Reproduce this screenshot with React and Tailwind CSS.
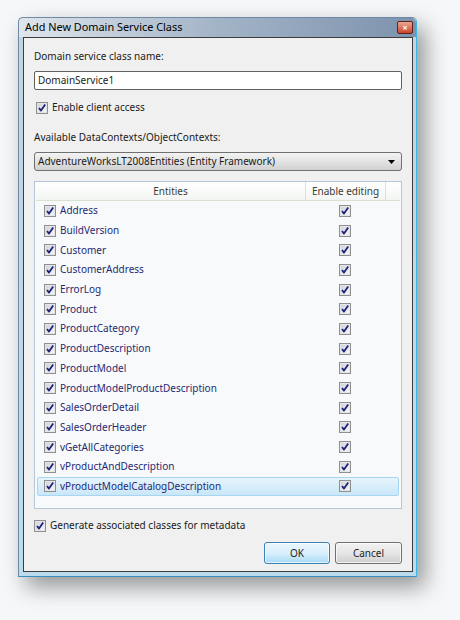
import React from 'react';

const entities = [
  'Address',
  'BuildVersion',
  'Customer',
  'CustomerAddress',
  'ErrorLog',
  'Product',
  'ProductCategory',
  'ProductDescription',
  'ProductModel',
  'ProductModelProductDescription',
  'SalesOrderDetail',
  'SalesOrderHeader',
  'vGetAllCategories',
  'vProductAndDescription',
  'vProductModelCatalogDescription',
];

// vista style checked box
const Check = () => (
  <svg width="12" height="12" viewBox="0 0 12 12" className="shrink-0">
    <defs>
      <linearGradient id="cbg" x1="0" y1="0" x2="1" y2="1">
        <stop offset="0" stopColor="#cfd2d7" />
        <stop offset="1" stopColor="#f7f7f7" />
      </linearGradient>
    </defs>
    <rect x="0.5" y="0.5" width="11" height="11" fill="#f4f4f4" stroke="#8f8f8f" />
    <rect x="1.5" y="1.5" width="9" height="9" fill="url(#cbg)" stroke="#e4e6ea" />
    <path d="M3 6 L5 8.6 L9.2 2.6" fill="none" stroke="#1f2379" strokeWidth="1.8" strokeLinejoin="round" />
  </svg>
);

export default function App() {
  return (
    <div className="min-h-screen bg-[#f6f7f9] pt-[17px] pl-[18px] font-['Noto_Sans',sans-serif] text-[10px] text-[#1a1a1a]">
      <div className="w-[399px] h-[560px] flex flex-col bg-gradient-to-b from-[#c4d3e0] to-[#bcdcee] border border-[#6f8aa6] border-r-[#3fb6e2] border-b-[#3a8fc0] rounded-t-[5px] shadow-[8px_10px_22px_rgba(0,0,0,0.4)]">
        {/* title bar */}
        <div className="h-[19px] flex items-center justify-between pl-[6px] pr-[3px] rounded-t-[5px] bg-gradient-to-r from-[#dfe5ec] via-[#a3b4c7] to-[#7d92ad]">
          <span className="text-[10.9px] text-black leading-none">Add New Domain Service Class</span>
          <div className="w-[16px] h-[13px] rounded-[2px] border border-[#5a2418] bg-gradient-to-b from-[#e9a894] to-[#c8432a] flex items-center justify-center text-white text-[9px] font-bold leading-none">
            ×
          </div>
        </div>

        {/* client area */}
        <div className="flex-1 ml-[4px] mr-[3px] mb-[4px] border border-[#3c3c3c] bg-[#f0f0f0] px-[10px] pt-[10px] flex flex-col">
          <div className="h-[16px] leading-[16px]">Domain service class name:</div>
          <div className="mt-[7px] h-[19px] border border-[#606060] rounded-[2px] bg-white flex items-center px-[3px]">
            DomainService1
          </div>
          <div className="mt-[11px] h-[13px] flex items-center gap-[4px] pl-[2px]">
            <Check />
            <span>Enable client access</span>
          </div>

          <div className="mt-[15px] h-[16px] leading-[16px]">Available DataContexts/ObjectContexts:</div>
          <div className="mt-[7px] h-[19px] border border-[#707070] rounded-[3px] bg-gradient-to-b from-[#f3f3f3] via-[#e3e3e3] to-[#d0d0d0] flex items-center justify-between pl-[3px] pr-[6px]">
            <span>AdventureWorksLT2008Entities (Entity Framework)</span>
            <svg width="7" height="4" viewBox="0 0 7 4">
              <path d="M0 0 H7 L3.5 4 Z" fill="#000" />
            </svg>
          </div>

          {/* entities grid */}
          <div className="mt-[10px] h-[328px] border border-[#b4c8da] bg-[#f8f9fa] flex flex-col px-[1px]">
            <div className="h-[19px] flex border-b border-[#d8e2d0] bg-gradient-to-b from-[#ffffff] to-[#f3f5f3] text-[#3b3b34]">
              <div className="w-[270px] flex items-center justify-center border-r border-[#dcdfe2]">Entities</div>
              <div className="w-[80px] flex items-center justify-center border-r border-[#dcdfe2]">Enable editing</div>
              <div className="flex-1" />
            </div>
            {entities.map((name, i) => {
              const sel = i === entities.length - 1;
              return (
                <div
                  key={name}
                  className={
                    sel
                      ? 'h-[19.7px] flex items-center mx-[1px] rounded-[2px] border border-[#a6d6f2] bg-gradient-to-b from-[#e6f4fc] to-[#c9e7f8]'
                      : 'h-[19.7px] flex items-center mx-[1px] border border-transparent'
                  }
                >
                  <div className="w-[269px] flex items-center gap-[4px] pl-[6px] text-[#262a72]">
                    <Check />
                    <span>{name}</span>
                  </div>
                  <div className="w-[80px] pl-[32px] flex items-center">
                    <Check />
                  </div>
                </div>
              );
            })}
          </div>

          <div className="mt-[10px] h-[13px] flex items-center gap-[4px]">
            <Check />
            <span>Generate associated classes for metadata</span>
          </div>

          <div className="mt-[10px] flex justify-end gap-[5px]">
            <button className="w-[66px] h-[22px] rounded-[3px] border border-[#3c7fb1] bg-gradient-to-b from-[#eaf6fd] via-[#d9f0fc] to-[#a7d9f5] shadow-[inset_0_0_0_1px_rgba(255,255,255,0.7)] text-[#1e1e1e]">
              OK
            </button>
            <button className="w-[67px] h-[22px] rounded-[3px] border border-[#707070] bg-gradient-to-b from-[#f2f2f2] via-[#e6e6e6] to-[#cfcfcf] shadow-[inset_0_0_0_1px_rgba(255,255,255,0.7)] text-[#1e1e1e]">
              Cancel
            </button>
          </div>
        </div>
      </div>
    </div>
  );
}
